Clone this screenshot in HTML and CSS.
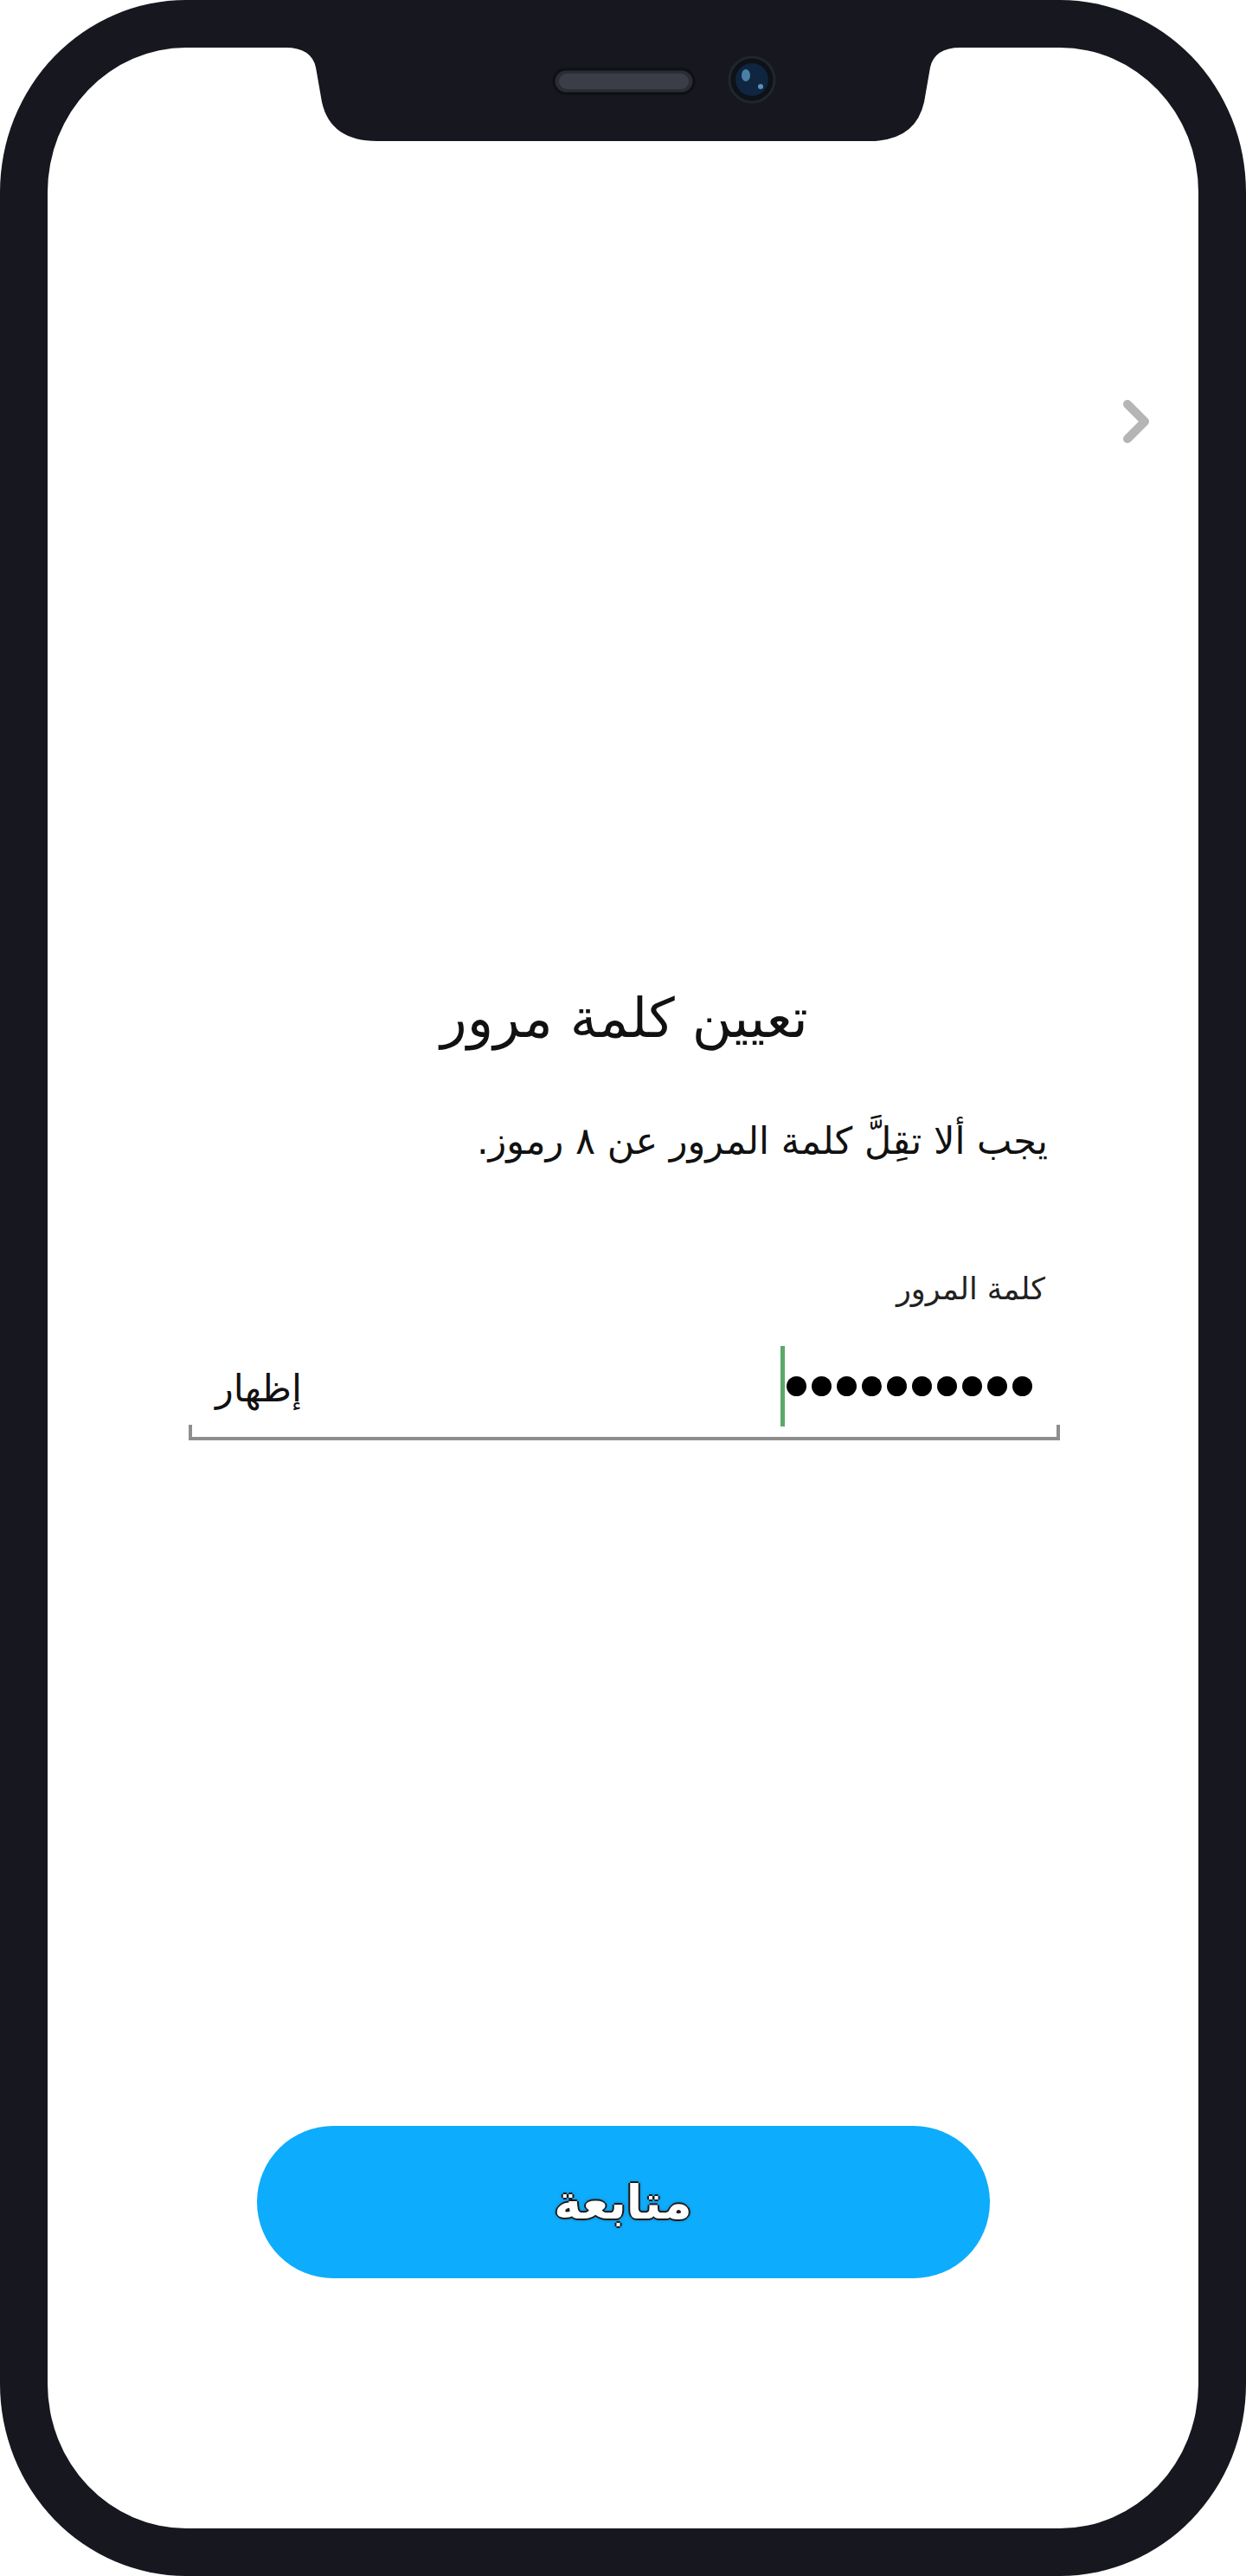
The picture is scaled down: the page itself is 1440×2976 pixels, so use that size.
FILE: index.html
```html
<!DOCTYPE html>
<html lang="ar" dir="rtl">
<head>
    <meta charset="UTF-8">
    <meta name="viewport" content="width=device-width, initial-scale=1.0">
    <title>تعيين كلمة مرور</title>
    <link rel="stylesheet" href="styles.css">
</head>
<body>
    <div class="phone">
        <svg class="notch" viewBox="0 0 1440 170" width="1440" height="170">
            <path d="M330 0 L330 55 Q360 55 365 78 L372 118 Q382 163 436 163 L1004 163 Q1058 163 1068 118 L1075 78 Q1080 55 1110 55 L1110 0 Z" fill="#17171f"/>
            <rect x="640" y="80" width="162" height="28" rx="14" fill="#2b2c35" stroke="#0f1016" stroke-width="3"/>
            <rect x="646" y="85" width="150" height="18" rx="9" fill="#3b3d47"/>
            <circle cx="869" cy="92" r="26" fill="#0d1118" stroke="#23252e" stroke-width="3"/>
            <circle cx="869" cy="92" r="19" fill="#0f2540"/>
            <ellipse cx="862" cy="87" rx="5" ry="7" fill="#4a7fa8"/>
            <circle cx="879" cy="100" r="3" fill="#5f8fb5"/>
        </svg>

        <div class="screen">
            <div class="topbar">
                <svg class="chevron" viewBox="0 0 32 52" width="32" height="52">
                    <path d="M6 6 L26 26 L6 46" fill="none" stroke="#b5b5b5" stroke-width="10" stroke-linecap="round" stroke-linejoin="round"/>
                </svg>
            </div>

            <div class="content">
                <h1 class="title">تعيين كلمة مرور</h1>
                <p class="hint">يجب ألا تقِلَّ كلمة المرور عن ٨ رموز.</p>

                <div class="field">
                    <label class="field-label">كلمة المرور</label>
                    <div class="field-row">
                        <div class="password">
                            <span class="dot"></span><span class="dot"></span><span class="dot"></span><span class="dot"></span><span class="dot"></span>
                            <span class="dot"></span><span class="dot"></span><span class="dot"></span><span class="dot"></span><span class="dot"></span>
                            <span class="caret"></span>
                        </div>
                        <span class="show">إظهار</span>
                    </div>
                </div>
            </div>

            <button class="continue">متابعة</button>
        </div>
    </div>
</body>
</html>
```

FILE: styles.css
```css
* {
    margin: 0;
    padding: 0;
    box-sizing: border-box;
}

body {
    font-family: "DejaVu Sans", "Noto Sans", sans-serif;
    background: white;
    color: #111;
}

.phone {
    position: relative;
    width: 1440px;
    height: 2976px;
    border: 55px solid #17171f;
    border-radius: 215px / 222px;
    background: white;
    overflow: hidden;
}

/* نتوء الكاميرا */
.notch {
    position: absolute;
    top: -55px;
    left: -55px;
}

.screen {
    height: 100%;
    display: flex;
    flex-direction: column;
}

.topbar {
    display: flex;
    padding-top: 406px;
    padding-right: 56px;
}

.chevron {
    display: block;
}

.content {
    padding: 0 160px 0 163px;
    margin-top: 623px;
}

.title {
    text-align: center;
    font-size: 63px;
    font-weight: normal;
    line-height: 1.3;
    color: #111;
}

.hint {
    font-size: 43px;
    line-height: 1.3;
    margin-top: 73px;
    padding-right: 14px;
    color: #111;
}

.field {
    margin-top: 120px;
}

.field-label {
    display: block;
    font-size: 35px;
    line-height: 1.3;
    padding-right: 17px;
    color: #222;
}

.field-row {
    position: relative;
    display: flex;
    align-items: center;
    justify-content: space-between;
    height: 118px;
    margin-top: 34px;
    padding: 0 32px 4px 31px;
    border-bottom: 4px solid #8e8e8e;
}

.field-row::before,
.field-row::after {
    content: "";
    position: absolute;
    bottom: 0;
    width: 4px;
    height: 14px;
    background: #8e8e8e;
}

.field-row::before {
    right: 0;
}

.field-row::after {
    left: 0;
}

.password {
    display: flex;
    align-items: center;
    gap: 6px;
}

.dot {
    width: 23px;
    height: 23px;
    border-radius: 50%;
    background: #000;
}

.caret {
    width: 5px;
    height: 93px;
    background: #5aa96b;
    margin-right: -4px;
}

.show {
    font-size: 43px;
    line-height: 1;
    padding-top: 6px;
    color: #111;
}

.continue {
    margin: auto auto 289px;
    width: 847px;
    height: 176px;
    border: none;
    border-radius: 88px;
    background: #0eacfc;
    font-family: "DejaVu Sans", sans-serif;
    font-size: 54px;
    font-weight: bold;
    color: white;
    text-shadow: -2px 0 #1a1a1a, 2px 0 #1a1a1a, 0 -2px #1a1a1a, 0 2px #1a1a1a, 0 0 4px #333;
    cursor: pointer;
}
```
